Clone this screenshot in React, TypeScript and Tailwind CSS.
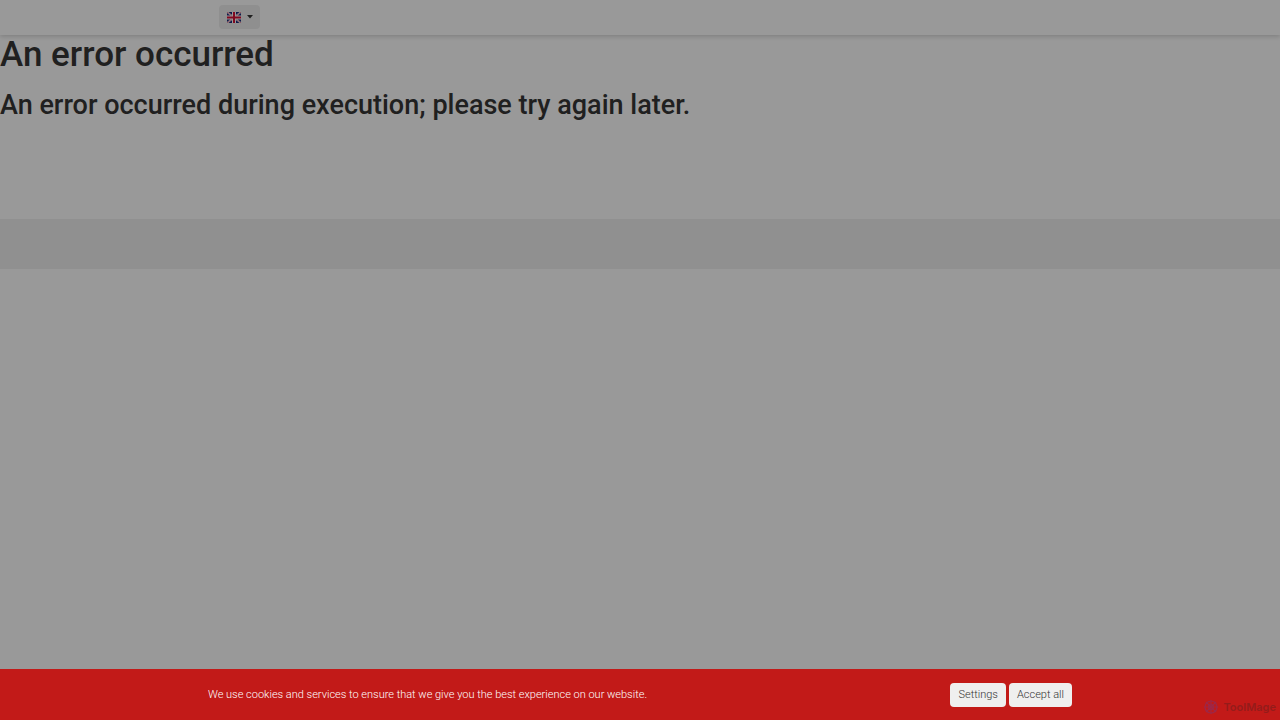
import { useState } from "react";

const FONT = "font-['Roboto','Liberation_Sans',sans-serif]";

function BritishFlag() {
  return (
    <svg
      viewBox="0 0 56 44"
      className="h-[11px] w-3.5"
      preserveAspectRatio="none"
      aria-hidden="true"
    >
      <path fill="#1c2a78" d="M0 0h56v44H0z" />
      <path stroke="#fff" strokeWidth="7" d="M0 0l56 44M56 0L0 44" />
      <path stroke="#d80f35" strokeWidth="2" d="M0 0l56 44M56 0L0 44" />
      <path stroke="#fff" strokeWidth="16" d="M28 0v44M0 22h56" />
      <path stroke="#d80f35" strokeWidth="8" d="M28 0v44M0 22h56" />
    </svg>
  );
}

function Header() {
  return (
    <header className="relative h-[35px] bg-white shadow-[0_2px_4px_rgba(0,0,0,0.15)]">
      <div className="mx-auto flex max-w-[864px] items-center px-[11px] py-[5px]">
        <button
          type="button"
          aria-label="Select language"
          className="flex h-6 items-center gap-1.5 rounded bg-[#efefef] pr-[7px] pl-2"
        >
          <BritishFlag />
          <svg viewBox="0 0 6 4" className="h-1 w-1.5" aria-hidden="true">
            <path fill="#363636" d="M0 0h6L3 3.5z" />
          </svg>
        </button>
      </div>
    </header>
  );
}

function Watermark() {
  return (
    <div className="pointer-events-none absolute right-1 bottom-1 flex items-center gap-1 opacity-35">
      <svg viewBox="0 0 16 16" className="size-4" fill="none" aria-hidden="true">
        <g stroke="#5a3f9e" strokeWidth="1.2">
          <circle cx="8" cy="8" r="6" />
          <circle cx="8" cy="8" r="2.5" />
          <path d="M8 1v14M1 8h14M3 3l10 10M13 3L3 13" />
        </g>
      </svg>
      <span className="font-['Inter',sans-serif] text-[11px] leading-[18px] font-semibold text-[#402020]">
        ToolMage
      </span>
    </div>
  );
}

function CookieBar({ onClose }: { onClose: () => void }) {
  return (
    <div className="fixed inset-x-0 bottom-0 z-20 bg-[#c21a18]">
      <div className="mx-auto flex min-h-[51px] max-w-[864px] items-center justify-between gap-4">
        <p className="text-[11px] leading-4 font-light text-white">
          We use cookies and services to ensure that we give you the best
          experience on our website.
        </p>
        <div className="flex shrink-0 gap-[3px]">
          <button
            type="button"
            className="h-6 rounded bg-[#efefef] px-2 pt-0.5 text-[11px] font-light text-[#333]"
          >
            Settings
          </button>
          <button
            type="button"
            onClick={onClose}
            className="h-6 rounded bg-[#efefef] px-2 pt-0.5 text-[11px] font-light text-[#333]"
          >
            Accept all
          </button>
        </div>
      </div>
      <Watermark />
    </div>
  );
}

export default function App() {
  const [open, setOpen] = useState(true);

  return (
    <div className={`min-h-screen bg-white text-[#363636] ${FONT}`}>
      <Header />
      <main className="pb-[98px]">
        <h1 className="text-[35px] leading-10 font-medium">
          An error occurred
        </h1>
        <h2 className="mt-3.5 text-[27px] leading-8 font-medium">
          An error occurred during execution; please try again later.
        </h2>
      </main>
      <footer className="h-[50px] bg-[#f0f0f0]" />

      {/* dims the page until the cookie choice is made */}
      {open && (
        <>
          <div className="fixed inset-0 z-10 bg-black/40" />
          <CookieBar onClose={() => setOpen(false)} />
        </>
      )}
    </div>
  );
}
